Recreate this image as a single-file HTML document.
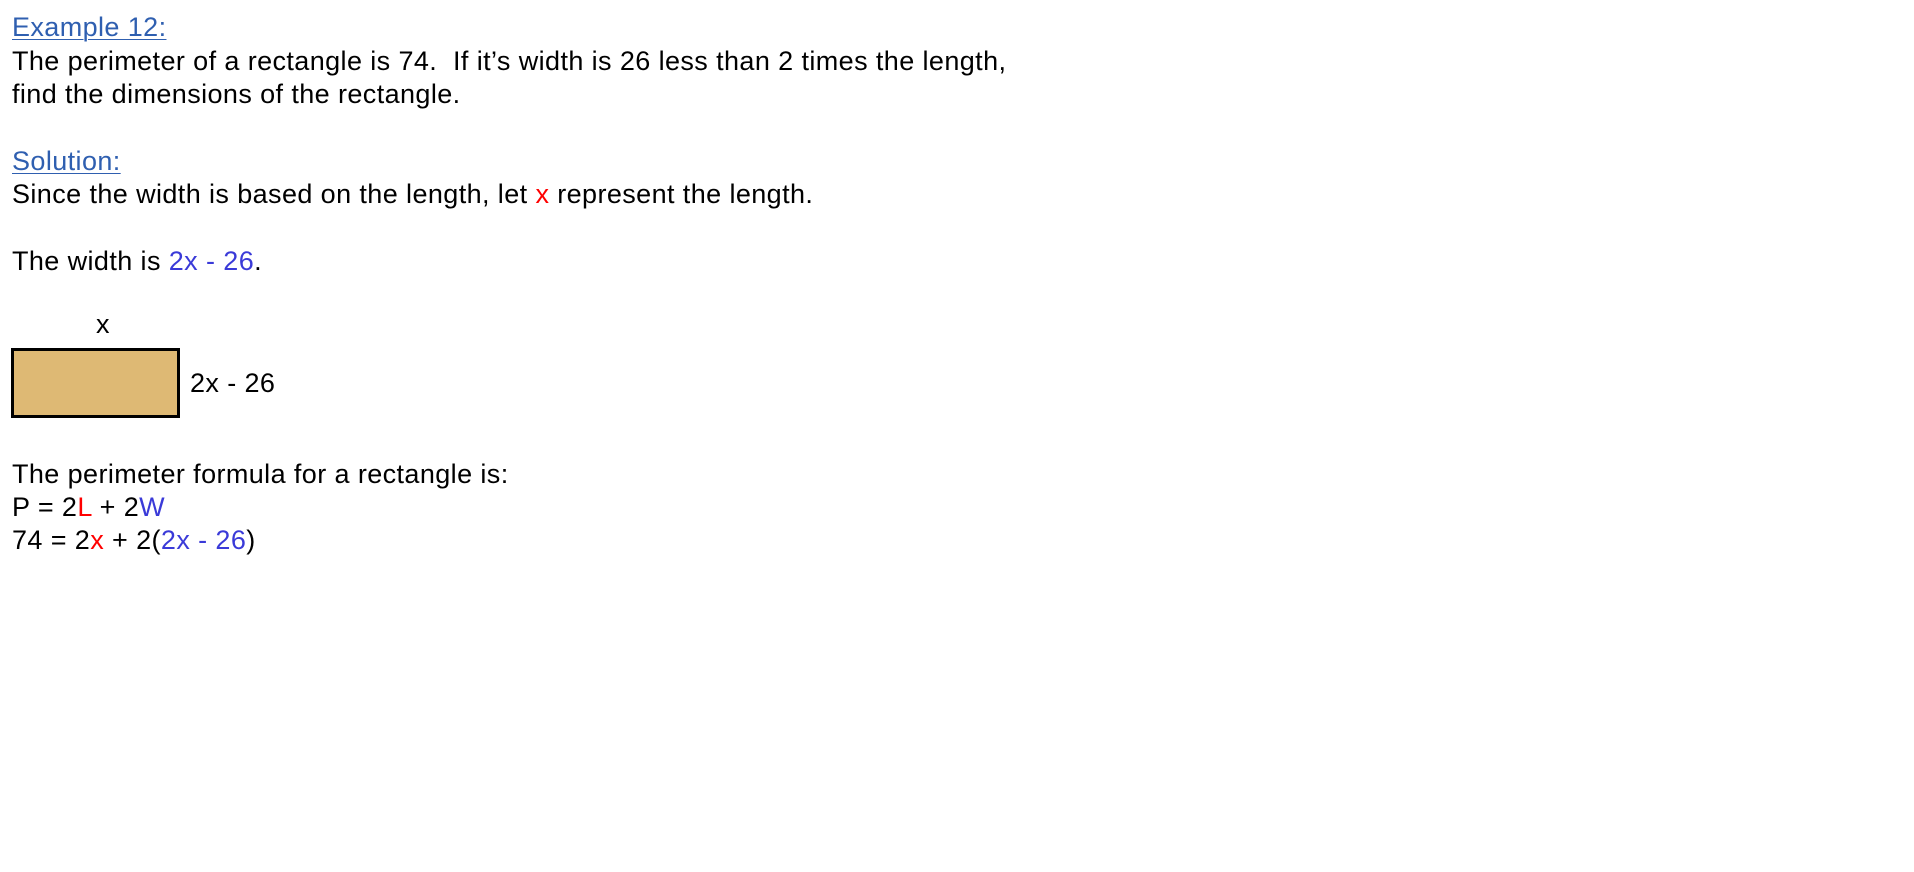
<!DOCTYPE html>
<html><head><meta charset="utf-8"><style>
body{margin:0;background:#fff;width:1914px;height:872px;overflow:hidden;position:relative;font-family:"Liberation Sans",Arial,sans-serif;font-size:27px;letter-spacing:0.4px;color:#000}
.l{position:absolute;left:12px;white-space:pre;line-height:30px}
.u{color:#2f5fb0;text-decoration:underline;text-decoration-thickness:1px;text-underline-offset:3px}
.r{color:#ff0000}.b{color:#3a3ad8}
.rect{position:absolute;left:11px;top:348px;width:163px;height:64px;background:#deb974;border:3px solid #000}
</style></head><body>
<div class="l u" style="top:12px">Example 12:</div>
<div class="l" style="top:46px">The perimeter of a rectangle is 74.  If it’s width is 26 less than 2 times the length,</div>
<div class="l" style="top:79px">find the dimensions of the rectangle.</div>
<div class="l u" style="top:146px">Solution:</div>
<div class="l" style="top:179px">Since the width is based on the length, let <span class="r">x</span> represent the length.</div>
<div class="l" style="top:246px">The width is <span class="b">2x - 26</span>.</div>
<div class="l" style="top:309px;left:96px">x</div>
<div class="rect"></div>
<div class="l" style="top:368px;left:190px">2x - 26</div>
<div class="l" style="top:459px">The perimeter formula for a rectangle is:</div>
<div class="l" style="top:492px">P = 2<span class="r">L</span> + 2<span class="b">W</span></div>
<div class="l" style="top:525px">74 = 2<span class="r">x</span> + 2(<span class="b">2x - 26</span>)</div>
</body></html>
